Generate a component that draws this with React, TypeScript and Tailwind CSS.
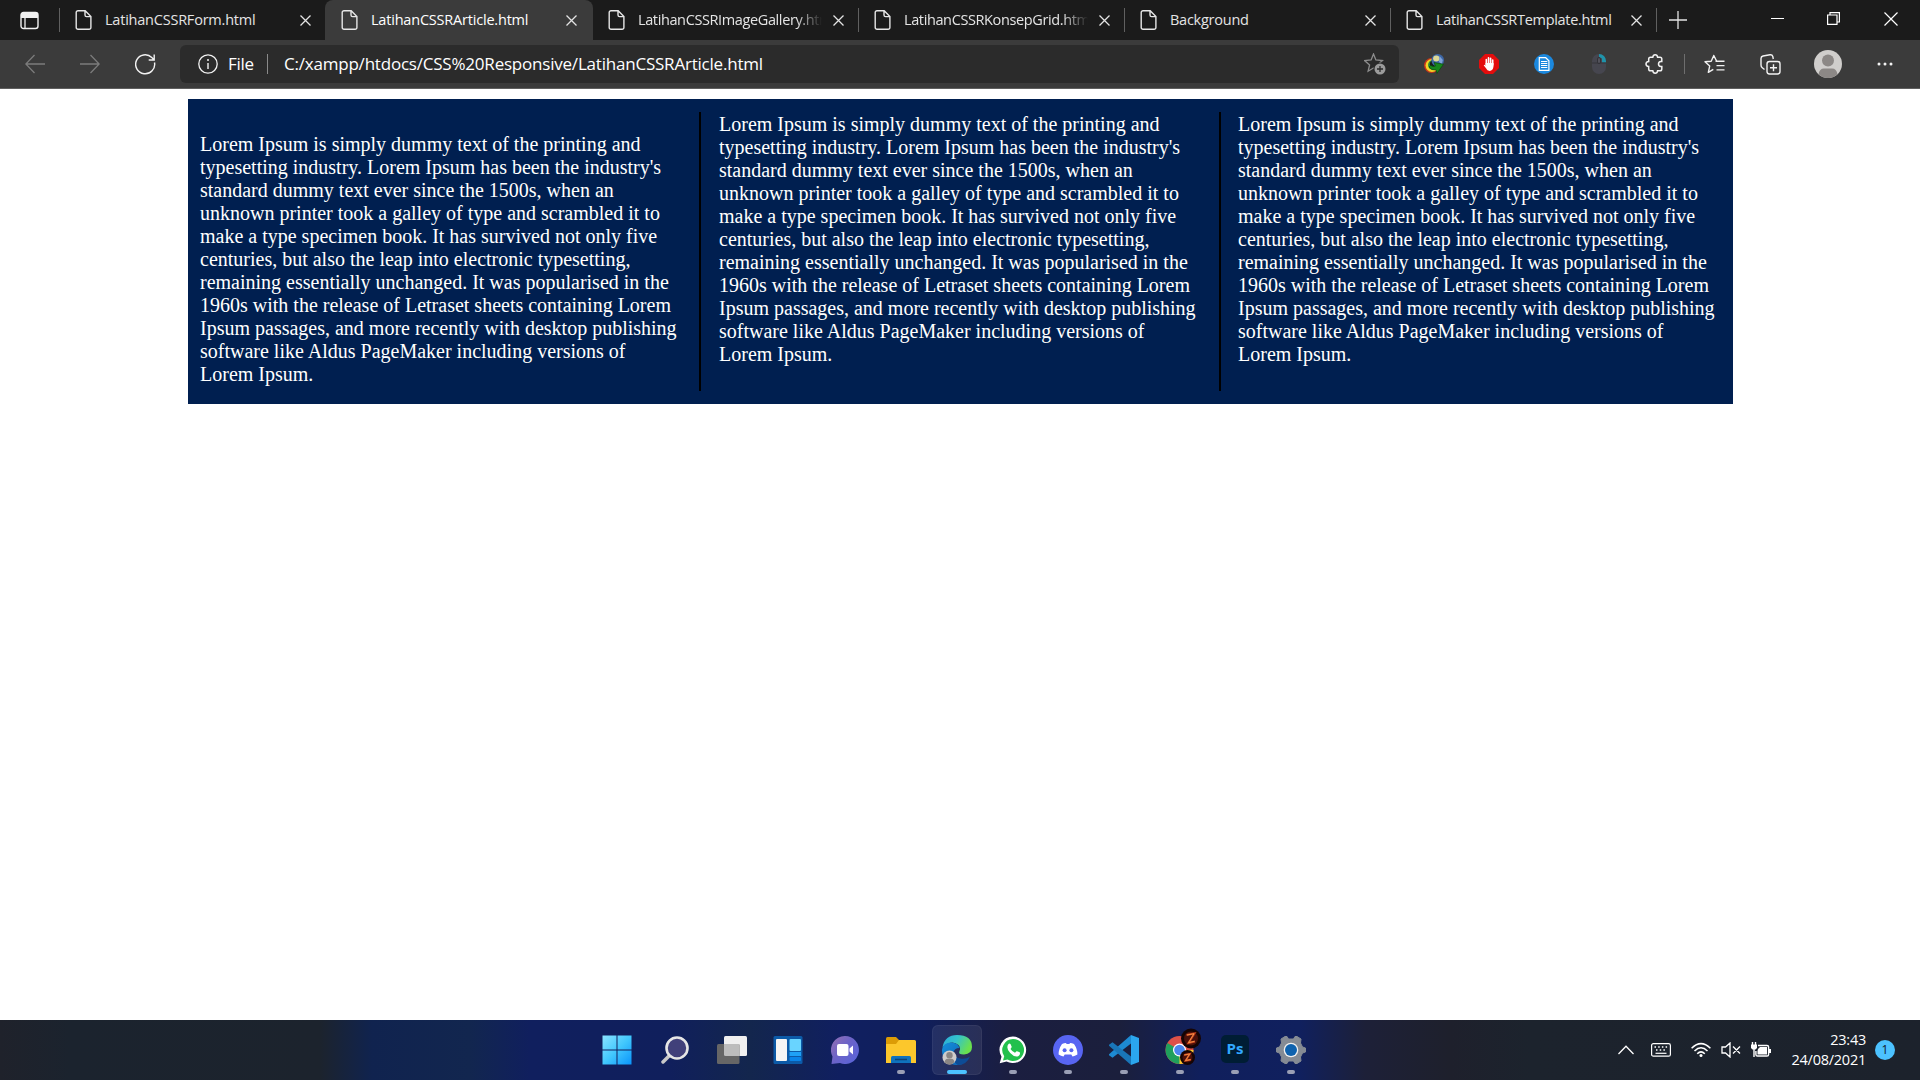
import React from "react";

const LINES = [
  "Lorem Ipsum is simply dummy text of the printing and",
  "typesetting industry. Lorem Ipsum has been the industry's",
  "standard dummy text ever since the 1500s, when an",
  "unknown printer took a galley of type and scrambled it to",
  "make a type specimen book. It has survived not only five",
  "centuries, but also the leap into electronic typesetting,",
  "remaining essentially unchanged. It was popularised in the",
  "1960s with the release of Letraset sheets containing Lorem",
  "Ipsum passages, and more recently with desktop publishing",
  "software like Aldus PageMaker including versions of",
  "Lorem Ipsum.",
];

type TabInfo = { title: string; track: string; active?: boolean; line?: boolean; fade?: boolean };

const TABS: TabInfo[] = [
  { title: "LatihanCSSRForm.html", track: "tracking-[-0.22px]" },
  { title: "LatihanCSSRArticle.html", track: "tracking-[-0.2px]", active: true },
  { title: "LatihanCSSRImageGallery.html", track: "tracking-[-0.38px]", line: true, fade: true },
  { title: "LatihanCSSRKonsepGrid.html", track: "tracking-[-0.38px]", line: true, fade: true },
  { title: "Background", track: "tracking-[-0.25px]", line: true },
  { title: "LatihanCSSRTemplate.html", track: "tracking-[-0.3px]", line: true },
];

function Svg({ s = 20, vb = 20, children, cls = "" }: { s?: number; vb?: number; children: React.ReactNode; cls?: string }) {
  return (
    <svg width={s} height={s} viewBox={`0 0 ${vb} ${vb}`} fill="none" className={`shrink-0 ${cls}`}>
      {children}
    </svg>
  );
}

function Tab({ title, track, active, line, fade }: TabInfo) {
  return (
    <div className={`flex h-10 shrink-0 items-center ${active ? "-ml-px w-[268px] rounded-t-lg bg-[#3b3b3b] pl-4" : "w-[266px] pl-[15px]"}`}>
      <svg width="17" height="20" viewBox="0 0 17 20" fill="none" stroke="#e6e6e6" strokeWidth="1.4" className="shrink-0">
        <path d="M3 .8h7.2l5.700 5.700v11a1.800 1.800 0 0 1-1.800 1.800H3a1.800 1.800 0 0 1-1.800-1.800V2.600A1.800 1.800 0 0 1 3 .8ZM10 .8v4.200a1.600 1.600 0 0 0 1.600 1.600h4.300" />
      </svg>
      <div
        className={`ml-[13px] h-6 w-[184px] overflow-hidden font-['Open_Sans',sans-serif] text-[14.5px] leading-[23px] whitespace-nowrap ${track} ${active ? "text-white" : "text-[#e4e4e4]"} ${fade ? "[mask-image:linear-gradient(to_right,#000_86%,transparent_100%)]" : ""}`}
      >
        {title}
      </div>
      <svg width="11" height="11" viewBox="0 0 11 11" stroke="#e4e4e4" strokeWidth="1.3" className="ml-[11px] shrink-0">
        <path d="M.5.5l10 10M10.500.5l-10 10" />
      </svg>
      {line && <div className="ml-auto h-6 w-px bg-[#606060]" />}
    </div>
  );
}

function TabStrip() {
  return (
    <div className="flex h-10 bg-[#1b1b1b]">
      <div className="flex w-[60px] items-center pl-[20px]">
        <Svg s={19} vb={19}>
          <rect x="1" y="1.500" width="17" height="16" rx="2.500" stroke="#f2f2f2" strokeWidth="1.400" />
          <path d="M1 3.500a2 2 0 0 1 2-2h13a2 2 0 0 1 2 2V7H1Z" fill="#f2f2f2" />
          <path d="M5 6v11" stroke="#f2f2f2" strokeWidth="1.300" />
        </Svg>
        <div className="ml-auto h-6 w-px bg-[#606060]" />
      </div>
      {TABS.map((t) => (
        <Tab key={t.title} {...t} />
      ))}
      <div className="flex flex-1 items-center pl-[12px]">
        <svg width="18" height="18" viewBox="0 0 18 18" stroke="#e4e4e4" strokeWidth="1.300">
          <path d="M9 0v18M0 9h18" />
        </svg>
        <div className="mb-[3px] ml-auto flex items-center pr-[22px]">
          <svg width="13" height="13" viewBox="0 0 13 13" stroke="#fff" shapeRendering="crispEdges">
            <path d="M0 6.500h13" />
          </svg>
          <svg width="13" height="13" viewBox="0 0 13 13" stroke="#fff" fill="none" strokeWidth="1.200" className="ml-[43px]">
            <path d="M.6 3h9.400v9.400H.6ZM3 3V.6h9.400V10H10" />
          </svg>
          <svg width="14" height="14" viewBox="0 0 14 14" stroke="#fff" strokeWidth="1.200" className="ml-[44px]">
            <path d="M.5.5l13 13M13.500.5l-13 13" />
          </svg>
        </div>
      </div>
    </div>
  );
}

function Slot({ w = "w-[55px]", children }: { w?: string; children: React.ReactNode }) {
  return <div className={`flex h-full shrink-0 items-center justify-center ${w}`}>{children}</div>;
}

function Toolbar() {
  return (
    <div className="flex h-[49px] items-center border-b border-[#5f5f5f] bg-[#3b3b3b] pl-[7px]">
      <Slot>
        <Svg>
          <path d="M20 10H1M9.500 1L.8 10l8.700 9" stroke="#7c7c7c" strokeWidth="1.300" />
        </Svg>
      </Slot>
      <Slot>
        <Svg>
          <path d="M0 10h19M10.500 1l8.700 9-8.700 9" stroke="#7c7c7c" strokeWidth="1.300" />
        </Svg>
      </Slot>
      <Slot w="w-[56px]">
        <Svg s={21} vb={21}>
          <path d="M19.500 8.500A9.500 9.500 0 1 1 16.800 3.500L19 5.700M19.200.5v5.500h-5.500" stroke="#f2f2f2" strokeWidth="1.400" />
        </Svg>
      </Slot>
      <div className="ml-[7px] flex h-[38px] w-[1219px] shrink-0 items-center rounded-md bg-[#2b2b2b] pl-[18px] font-['Open_Sans',sans-serif] text-white">
        <Svg>
          <circle cx="10" cy="10" r="9.200" stroke="#f2f2f2" strokeWidth="1.300" />
          <path d="M10 9v6" stroke="#f2f2f2" strokeWidth="1.400" />
          <circle cx="10" cy="6" r="1" fill="#f2f2f2" />
        </Svg>
        <span className="ml-[10px] w-[39px] text-[17px] leading-6 tracking-[-0.3px]">File</span>
        <div className="h-5 w-px bg-[#8a8a8a]" />
        <span className="ml-[16px] text-[17px] leading-6 tracking-[-0.21px] whitespace-nowrap">C:/xampp/htdocs/CSS%20Responsive/LatihanCSSRArticle.html</span>
        <Svg s={22} vb={22} cls="mr-[13px] ml-auto">
          <path d="M9.500 1l2.400 6 6.500.6-5 4.300 1.500 6.300-5.400-3.300-5.400 3.300 1.500-6.300-5-4.300 6.500-.6Z" stroke="#8d8d8d" strokeWidth="1.300" />
          <circle cx="16" cy="16" r="6.500" fill="#2b2b2b" />
          <circle cx="16" cy="16" r="5.500" fill="#9b9b9b" />
          <path d="M16 13v6M13 16h6" stroke="#2b2b2b" strokeWidth="1.300" />
        </Svg>
      </div>
      <Slot w="ml-[8px] w-[54px]">
        <Svg>
          <circle cx="7.500" cy="11.500" r="7.500" fill="#c9361c" />
          <circle cx="8" cy="11.500" r="6.500" fill="#f3d426" />
          <circle cx="9" cy="11" r="5" fill="#2f8f38" />
          <circle cx="9.800" cy="10.500" r="4" fill="#181d18" />
          <circle cx="13.700" cy="6.300" r="6.300" fill="#3d66a4" />
          <ellipse cx="12.300" cy="4.600" rx="3.200" ry="3" fill="#dcd896" />
          <path d="M15.500 2l3.300 4-1 4-2.800-2Z" fill="#7fa3d8" />
          <path d="M6.500 11.500q3 1.500 5 .5L10 8.500l9.500 1.800-6.500 9-.8-3.300q-5 .5-7.200-3Z" fill="#17881c" stroke="#0b4a0f" strokeWidth=".7" />
        </Svg>
      </Slot>
      <Slot>
        <Svg>
          <path d="M6 0h8l6 6v8l-6 6H6l-6-6V6Z" fill="#e40d0d" />
          <path d="M7.300 11V5.500M9.500 10V3.800M11.600 10V4.300M13.700 11V6" stroke="#fff" strokeWidth="1.600" strokeLinecap="round" />
          <path d="M6.500 9h8v3.500q-.6 4.400-3.800 4.400-2.600 0-3.700-2.600L4.700 11.300l1-.6 1 1Z" fill="#fff" />
        </Svg>
      </Slot>
      <Slot>
        <Svg>
          <circle cx="10" cy="10" r="10" fill="#1b88de" />
          <path d="M5.300 3.700h6.400l3.200 3v9.600H5.300Z" stroke="#fff" strokeWidth="1.200" />
          <path d="M7 7.500h6.300M7 9.500h6.300M7 11.500h6.300M7 13.500h6.300" stroke="#fff" strokeWidth="1" />
        </Svg>
      </Slot>
      <Slot>
        <Svg>
          <rect x="3" y="0" width="14" height="20" rx="7" fill="#46464f" />
          <path d="M10 0A7 7 0 0 1 17 7v1.500h-4V4.500L10 3Z" fill="#1f93aa" />
          <path d="M3 9h14" stroke="#34343a" />
          <rect x="8.500" y="3.500" width="3" height="6" rx="1.500" stroke="#2c2c31" strokeWidth=".8" fill="#53535c" />
        </Svg>
      </Slot>
      <Slot w="w-[57px]">
        <Svg>
          <path d="M5.500 3.200h2.300q.3-2.400 2.400-2.400t2.400 2.400H15q1.800 0 1.800 1.800v2.500h-1q-2.300.3-2.300 2.500t2.300 2.500h1V15q0 1.800-1.800 1.800h-2.400q-.3 2.400-2.400 2.400t-2.400-2.400H5.500Q3.700 16.800 3.700 15v-2.500Q1 12.300 1 10t2.700-2.500V5q0-1.800 1.800-1.800Z" stroke="#f2f2f2" strokeWidth="1.500" />
        </Svg>
      </Slot>
      <div className="ml-[1px] h-5 w-px bg-[#6e6e6e]" />
      <Slot w="w-[59px]">
        <Svg s={21} vb={21}>
          <path d="M18.500 7.300h-5.800L9.800 1.500 7.200 7.200l-6.200.6 4.700 4.300-1.400 6.200 5-3M11.500 7.300h9M12.500 11.600h8M12.500 15.900h8" stroke="#f2f2f2" strokeWidth="1.400" strokeLinejoin="round" />
        </Svg>
      </Slot>
      <Slot w="w-[52px]">
        <Svg s={21} vb={21}>
          <rect x="7" y="7.500" width="13" height="12.500" rx="2.400" stroke="#f2f2f2" strokeWidth="1.400" />
          <path d="M13.500 10.300v7M10 13.800h7M4.500 15.500L2.300 13.800Q1 12.800 1 11V4.500Q1 2.500 3 2L10 .8q2.200-.3 2.800 1.700L13.300 5" stroke="#f2f2f2" strokeWidth="1.400" />
        </Svg>
      </Slot>
      <Slot w="w-[64px]">
        <Svg s={28} vb={28}>
          <circle cx="14" cy="14" r="14" fill="#d0cecc" />
          <circle cx="14" cy="10.500" r="6" fill="#8c8886" />
          <path d="M4.500 24.300Q5.500 18.500 10 18.500h8q4.500 0 5.500 5.800A14 14 0 0 1 4.500 24.300Z" fill="#8c8886" />
        </Svg>
      </Slot>
      <Slot w="w-[49px]">
        <Svg s={18} vb={18}>
          <circle cx="3" cy="9" r="1.500" fill="#f2f2f2" />
          <circle cx="9" cy="9" r="1.500" fill="#f2f2f2" />
          <circle cx="15" cy="9" r="1.500" fill="#f2f2f2" />
        </Svg>
      </Slot>
    </div>
  );
}

function Column({ cls }: { cls: string }) {
  return (
    <div className={`h-[279px] ${cls}`}>
      {LINES.map((l) => (
        <p key={l} className="h-[23px] leading-[23px] whitespace-nowrap">
          {l}
        </p>
      ))}
    </div>
  );
}

function TaskIcon({ w = "w-[56px]", dot = "", boxed, children }: { w?: string; dot?: string; boxed?: boolean; children: React.ReactNode }) {
  return (
    <div className={`flex h-[60px] shrink-0 justify-center ${w}`}>
      <div className={`relative mt-[5px] flex h-[50px] w-[50px] items-center justify-center rounded-md ${boxed ? "bg-white/8 ring-1 ring-white/5 ring-inset" : ""}`}>
        {children}
        {dot && <div className={`absolute bottom-[1px] h-1 rounded-full ${dot}`} />}
      </div>
    </div>
  );
}

const DOT = "w-2 bg-[#9a9fb5]";

function Taskbar() {
  return (
    <div className="flex h-[60px] items-center bg-[linear-gradient(to_right,#1f222b_0px,#1b232e_70px,#1c232d_320px,#10234f_372px,#12264f_470px,#101f5e_530px,#101f5c_670px,#13264d_750px,#101f60_840px,#101f5c_920px,#1b1e40_1010px,#1b1f3c_1120px,#101f5c_1200px,#10205e_1300px,#1d2038_1365px,#1e202c_1450px,#1c232d_1530px,#1c222c_1920px)] pl-[588px]">
      <TaskIcon w="w-[58px]">
        <Svg s={30} vb={30}>
          <defs>
            <linearGradient id="win" x1="0" y1="0" x2="1" y2="1">
              <stop stopColor="#8be3ff" />
              <stop offset=".5" stopColor="#42c8fd" />
              <stop offset="1" stopColor="#0a94fb" />
            </linearGradient>
          </defs>
          <path d="M.5.5h14v14H.5ZM15.500.5h14v14h-14ZM.5 15.500h14v14H.5ZM15.500 15.500h14v14h-14Z" fill="url(#win)" />
        </Svg>
      </TaskIcon>
      <TaskIcon w="w-[58px]">
        <Svg s={28} vb={28}>
          <path d="M9.500 18.500L2 26" stroke="#c9c9c9" strokeWidth="3.500" strokeLinecap="round" />
          <circle cx="16" cy="12" r="10.500" fill="#41407a" stroke="#e6e6e6" strokeWidth="2.600" />
        </Svg>
      </TaskIcon>
      <TaskIcon>
        <Svg s={30} vb={30}>
          <rect x="7" y="1" width="23" height="20" rx="1.500" fill="#f0f0f0" />
          <rect x="0" y="9" width="22.500" height="20" rx="1.500" fill="#666" />
          <path d="M7 9h15.500v12H8.500A1.500 1.500 0 0 1 7 19.500Z" fill="#bdbdbd" />
        </Svg>
      </TaskIcon>
      <TaskIcon>
        <Svg s={30} vb={30}>
          <rect x=".5" y="1" width="29" height="28" rx="1.500" fill="#0c5aa8" />
          <rect x="3" y="4" width="11" height="22" rx="1" fill="#f5f5f5" />
          <rect x="16.500" y="4" width="11.500" height="12" rx="1" fill="#69d4ff" />
          <rect x="16.500" y="17" width="11.500" height="4" fill="#1ea1f7" />
          <rect x="16.500" y="22" width="11.500" height="4" rx="1" fill="#0a84e8" />
        </Svg>
      </TaskIcon>
      <TaskIcon w="w-[57px]">
        <Svg s={28} vb={28}>
          <defs>
            <linearGradient id="chat" x1="0" y1="0" x2="1" y2=".8">
              <stop stopColor="#9670b0" />
              <stop offset=".5" stopColor="#6b63c8" />
              <stop offset="1" stopColor="#5a64d8" />
            </linearGradient>
          </defs>
          <path d="M14 0a14 14 0 1 1-5 27.100L.5 28l1-7.500A14 14 0 0 1 14 0Z" fill="url(#chat)" />
          <rect x="6" y="8" width="11.500" height="12" rx="2" fill="#fff" />
          <path d="M18.500 12.500l3.500-3v9l-3.500-3Z" fill="#fff" />
        </Svg>
      </TaskIcon>
      <TaskIcon dot={DOT}>
        <Svg s={30} vb={30}>
          <path d="M0 3.500Q0 2 1.500 2H10l3 3v5H0Z" fill="#dc9c06" />
          <path d="M0 9h10l3-4h15.500Q30 5 30 6.500V28H0Z" fill="#fcc72c" />
          <path d="M5 28v-5.500Q5 21 6.500 21h17q1.500 0 1.500 1.500V28Z" fill="#0f72bd" />
          <path d="M9 24.500h12" stroke="#0c4376" strokeWidth="1.500" />
        </Svg>
      </TaskIcon>
      <TaskIcon boxed dot="w-5 bg-[#4cc2ff]">
        <Svg s={30} vb={30}>
          <defs>
            <linearGradient id="edge" x1="0" y1="0" x2="1" y2=".4">
              <stop stopColor="#2aa9dc" />
              <stop offset=".5" stopColor="#34c3cb" />
              <stop offset="1" stopColor="#6ae04e" />
            </linearGradient>
            <linearGradient id="wave" x1="0" y1="0" x2="1" y2="1">
              <stop stopColor="#1590dc" />
              <stop offset="1" stopColor="#0c62b4" />
            </linearGradient>
          </defs>
          <path d="M.5 12Q3 0 15 0q15 0 15 12 0 7-8 7.500-6.500 0-4.500-3.500 1.500-3-1-6Q10 4 .5 12Z" fill="url(#edge)" />
          <path d="M0 15Q1 7.500 9 7.500q7 .3 8.500 5.500-5.500 0-6 5-.2 7 9 11Q16 30.500 12 29.700 0 27 0 15Z" fill="url(#wave)" />
          <path d="M11.400 15q-.8 8 8.600 8.800 4.500.3 8-2.300-3.500 8.500-12 8.500-7-4-4.600-15Z" fill="#0d4c96" />
          <circle cx="7.500" cy="22.500" r="7" fill="#cfcdcb" />
          <circle cx="7.500" cy="20.200" r="3.200" fill="#8a8684" />
          <path d="M2.500 27.300q.6-3.500 3-3.500h4q2.400 0 3 3.500-2 2.200-5 2.200t-5-2.200Z" fill="#8a8684" />
        </Svg>
      </TaskIcon>
      <TaskIcon w="w-[55px]" dot={DOT}>
        <Svg s={28} vb={28}>
          <path d="M14 .5A13.300 13.300 0 1 1 7.500 25.500L.7 27.300 2.500 20.700A13.300 13.300 0 0 1 14 .5Z" fill="#fff" />
          <path d="M14 3a11 11 0 1 1-5.500 20.500L4 24.500l1.200-4.300A11 11 0 0 1 14 3Z" fill="#22c04c" />
          <path d="M9.500 8q1-1 2 0l1.200 2.800q0 1-1.200 2.200 2 3 4.500 3.800l1.500-1.600q.6-.3 3.500 1.400.4 2.500-1.800 3.600-4 1.200-8-3.200Q6.500 12 9.500 8Z" fill="#fff" />
        </Svg>
      </TaskIcon>
      <TaskIcon dot={DOT}>
        <Svg s={30} vb={30}>
          <circle cx="15" cy="15" r="15" fill="#5865f2" />
          <path d="M9 9q2-1 4-1l.6 1h2.800L17 8q2 0 4 1 3.500 5 3.400 10.500Q22 21 19.500 21.500l-1.200-2h-6.600l-1.200 2Q8 21 5.600 19.500 5.500 14 9 9Z" fill="#fff" />
          <circle cx="11.600" cy="15.300" r="2" fill="#5865f2" />
          <circle cx="18.400" cy="15.300" r="2" fill="#5865f2" />
        </Svg>
      </TaskIcon>
      <TaskIcon dot={DOT}>
        <Svg s={30} vb={30}>
          <path d="M22 8.500L3.500 22.800 0 20.300v-1L22 0Z" fill="#1d8ad2" />
          <path d="M22 21.500L3.500 7.200 0 9.700v1L22 30Z" fill="#1976b8" />
          <path d="M22 0l8 3v24l-8 3Z" fill="#2ba6ee" />
        </Svg>
      </TaskIcon>
      <TaskIcon w="w-[55px]" dot={DOT}>
        <svg width="36" height="40" viewBox="0 0 36 40" fill="none" className="mb-[4px] ml-[7px] shrink-0">
          <circle cx="14.500" cy="22" r="14" fill="#dd5148" />
          <path d="M14.500 22L2.400 15A14 14 0 0 0 14.500 36L20 26Z" fill="#1fa05c" />
          <path d="M14.500 22h14A14 14 0 0 1 14.500 36Z" fill="#fbc92e" />
          <circle cx="14.500" cy="22" r="6.500" fill="#fff" />
          <circle cx="14.500" cy="22" r="5.300" fill="#4a86ee" />
          <circle cx="26" cy="10.500" r="10" fill="#160404" />
          <circle cx="26" cy="10.500" r="7" fill="#4a100a" />
          <path d="M21.500 7l8-1.500-6 9.500 6.500-1.500" stroke="#c8401c" strokeWidth="2" />
          <path d="M22 7l7-1.300-5.500 9 6-1.400" stroke="#f5a452" strokeWidth=".8" />
          <circle cx="22.500" cy="29.500" r="7.500" fill="#160404" />
          <circle cx="22.500" cy="29.500" r="5" fill="#4a100a" />
          <path d="M19 27l6-1.200-4.500 7 5.500-1.200" stroke="#d04a20" strokeWidth="1.700" />
          <path d="M19.500 27l5.200-1-4.200 6.600 5-1.100" stroke="#f5a452" strokeWidth=".7" />
        </svg>
      </TaskIcon>
      <TaskIcon dot={DOT}>
        <div className="mb-[2px] flex h-7 w-7 items-center justify-center rounded-[5px] bg-[#001d34] pb-[2px] font-['Open_Sans',sans-serif] text-[15px] leading-4 font-bold text-[#31a8ff]">Ps</div>
      </TaskIcon>
      <TaskIcon w="w-[55px]" dot={DOT}>
        <Svg s={30} vb={30}>
          <path d="M9 1.500h2L12.500 4h5L19 1.500h2L25 4l-.5 4L26.500 12l3 1v4l-3 1-2 4 .5 4-4 2.500h-2L17.500 26h-5L11 28.500H9L5 26l.5-4-2-4-3-1v-4l3-1 2-4L5 4Z" fill="#858b94" stroke="#858b94" strokeLinejoin="round" />
          <circle cx="15" cy="15" r="7.300" fill="#f0f0f0" />
          <circle cx="15" cy="15" r="6" fill="#0f62ae" />
        </Svg>
      </TaskIcon>
      <div className="ml-auto flex items-center pr-[25px] text-white">
        <svg width="16" height="10" viewBox="0 0 16 10" fill="none" stroke="#fff" strokeWidth="1.300">
          <path d="M.5 9L8 1.200 15.500 9" />
        </svg>
        <svg width="20" height="14" viewBox="0 0 20 14" fill="none" stroke="#fff" strokeWidth="1.200" className="ml-[17px]">
          <rect x=".6" y=".6" width="18.800" height="12.600" rx="1.800" />
          <path d="M3.500 4h13M5 7h10.500" strokeDasharray="1.500 2.200" strokeWidth="1.500" />
          <path d="M4.500 10.300h11" />
        </svg>
        <svg width="20" height="16" viewBox="0 0 20 16" fill="none" stroke="#fff" strokeWidth="1.500" className="ml-5">
          <path d="M.6 6.200Q10-3 19.400 6.200M3.500 9Q10 2.500 16.500 9M6.200 11.700Q10 8 13.800 11.700" />
          <circle cx="10" cy="13.500" r="1.500" fill="#fff" stroke="none" />
        </svg>
        <svg width="20" height="16" viewBox="0 0 20 16" fill="none" stroke="#fff" strokeWidth="1.300" className="ml-[10px]">
          <path d="M1 5h3.500L9 1v14L4.500 11H1ZM12 4.500l7 7M19 4.500l-7 7" />
        </svg>
        <svg width="20" height="16" viewBox="0 0 20 16" fill="none" stroke="#fff" strokeWidth="1.400" className="ml-[10px]">
          <path d="M7 3.500h9a1.600 1.600 0 0 1 1.600 1.600v7.300a1.600 1.600 0 0 1-1.600 1.600H6.500a1.600 1.600 0 0 1-1.600-1.600V9M1.500 0v3M4.500 0v3" />
          <path d="M0 2.500h6V6L4.500 7.500H1.500L0 6ZM7 7l2-2h7v7.500H6.500V9ZM18 7h2v4h-2Z" fill="#fff" stroke="none" />
          <path d="M3 7v8" />
        </svg>
        <div className="ml-[13px] w-[82px] text-right font-['Open_Sans',sans-serif] text-[14.500px] leading-5 tracking-[-0.25px]">
          <div>23:43</div>
          <div>24/08/2021</div>
        </div>
        <div className="ml-[9px] flex h-5 w-5 items-center justify-center rounded-full bg-[#4cc2ff] font-['Open_Sans',sans-serif] text-[12px] leading-5 text-[#10202c]">1</div>
      </div>
    </div>
  );
}

export default function App() {
  return (
    <div className="flex h-[1080px] w-[1920px] flex-col overflow-hidden bg-white">
      <TabStrip />
      <Toolbar />
      <div className="flex-1 px-[188px] pt-[10px]">
        <div className="flex h-[305px] w-[1545px] bg-[#001f50] pt-[13px] pl-3 font-['Liberation_Serif',serif] text-[20px] text-white">
          <Column cls="w-[501px] pt-[21px] border-r-2 border-black" />
          <Column cls="w-[520px] pt-px pl-[18px] border-r-2 border-black" />
          <Column cls="pt-px pl-[17px]" />
        </div>
      </div>
      <Taskbar />
    </div>
  );
}
